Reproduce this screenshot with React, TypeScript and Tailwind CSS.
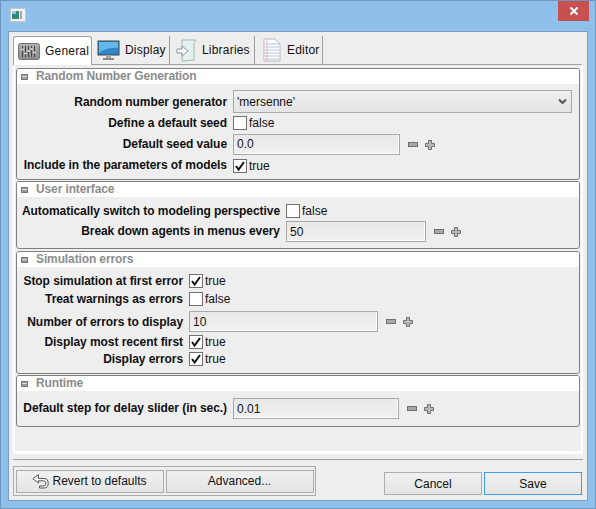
import { ReactNode } from "react";

const Check = ({ on }: { on: boolean }) => (
  <span className="w-[14px] h-[14px] border border-[#707070] bg-white flex items-center justify-center shrink-0">
    {on && (
      <svg width="12" height="12" viewBox="0 0 12 12">
        <path d="M2 6 L4.6 9.5 L10 2" fill="none" stroke="#111" strokeWidth="2" />
      </svg>
    )}
  </span>
);

const MinusPlus = () => (
  <div className="flex items-center gap-[7px] ml-[8px]">
    <svg width="10" height="5" viewBox="0 0 10 5">
      <rect x="0.5" y="0.5" width="9" height="4" fill="#a8a8a8" stroke="#707070" />
    </svg>
    <svg width="10" height="10" viewBox="0 0 10 10">
      <path d="M3.5 .5h3v3h3v3h-3v3h-3v-3h-3v-3h3z" fill="#b8b8b8" stroke="#707070" />
    </svg>
  </div>
);

const Section = ({ title, children, className }: { title: string; children: ReactNode; className: string }) => (
  <div className={`border border-[#808080] rounded-[3px] overflow-hidden shrink-0 ${className}`}>
    <div className="h-[15px] bg-white flex items-center pl-[4px]">
      <span className="w-[7px] h-[6px] bg-[#9a9a9a] border border-[#777] mr-[8px] flex items-center">
        <span className="block w-full h-px bg-[#ddd]" />
      </span>
      <span className="font-bold text-[12px] text-[#8c8c8c] tracking-[-0.12px] -translate-y-px">{title}</span>
    </div>
    {children}
  </div>
);

const Row = ({ label, w, h, up, children }: { label: string; w: string; h: string; up?: boolean; children: ReactNode }) => (
  <div className={`flex items-center ${h}`}>
    <div className={`text-right font-bold text-[12px] text-[#111] whitespace-nowrap shrink-0 tracking-[-0.06px] ${w} ${up ? "-translate-y-px" : ""}`}>{label}</div>
    <div className="flex items-center ml-[6px]">{children}</div>
  </div>
);

const Bool = ({ on }: { on: boolean }) => (
  <div className="flex items-center gap-[2px] text-[12px] text-[#111]">
    <Check on={on} />
    <span>{on ? "true" : "false"}</span>
  </div>
);

const Field = ({ value, w, h, up }: { value: string; w: string; h: string; up?: boolean }) => (
  <div className={`border border-[#a8a8a8] bg-gradient-to-b from-[#e8e8e8] to-[#f0f0f0] shadow-[inset_0_-1px_0_#fff,inset_-1px_0_0_#fff] flex items-center pl-[3px] text-[12px] text-[#111] ${up ? "pb-[2px]" : ""} ${w} ${h}`}>
    {value}
  </div>
);

const Tab = ({ icon, label, w, active }: { icon: ReactNode; label: string; w: string; active?: boolean }) => (
  <div
    className={`flex items-center ${w} ${
      active
        ? "h-[29px] bg-white border border-b-0 border-[#a0a0a0] rounded-t-[3px] -mb-px z-10"
        : "h-[28px] border-r border-[#a0a0a0]"
    }`}
  >
    {icon}
    <span className="text-[12px] text-[#111] tracking-[0.2px]">{label}</span>
  </div>
);

const BarButton = ({ children, w, blue }: { children: ReactNode; w: string; blue?: boolean }) => (
  <div
    className={`h-[23px] ${w} border ${blue ? "border-[#3c9cf0]" : "border-[#acacac]"} bg-gradient-to-b from-[#f0f0f0] to-[#e5e5e5] flex items-center justify-center gap-[3px] text-[12px] text-[#111]`}
  >
    {children}
  </div>
);

export default function App() {
  return (
    <div
      className="w-[596px] h-[509px] bg-[#8fc0ec] border border-[#6f97c0] flex flex-col overflow-hidden"
      style={{ fontFamily: '"Liberation Sans", Arial, sans-serif' }}
    >
      {/* title bar */}
      <div className="h-[30px] flex justify-between items-start shrink-0">
        <svg width="16" height="14" viewBox="0 0 16 14" className="ml-[9px] mt-[7px]">
          <rect x="0.5" y="0.5" width="15" height="13" fill="#f2f2f2" stroke="#c8c8c8" />
          <rect x="2" y="3" width="7" height="8" fill="#2f8a78" />
          <rect x="2" y="3" width="4" height="3" fill="#8fc5e8" />
          <rect x="10" y="3" width="2" height="8" fill="#a8a8a8" />
        </svg>
        <div className="w-[31px] h-[20px] bg-[#c75050] mr-[6px] flex items-center justify-center">
          <svg width="10" height="10" viewBox="0 0 10 10">
            <path d="M1.5 1.5 L8.5 8.5 M8.5 1.5 L1.5 8.5" stroke="#fff" strokeWidth="2" />
          </svg>
        </div>
      </div>

      {/* client area */}
      <div className="mx-[7px] h-[470px] bg-[#eeeeee] border border-[#7a9cc0] flex flex-col px-[4px] pt-[4px]">
        {/* tabs */}
        <div className="flex items-end h-[28px] shrink-0">
          <Tab
            active
            w="w-[79px]"
            label="General"
            icon={
              <svg width="22" height="17" viewBox="0 0 22 17" className="ml-[4px] mr-[5px] shrink-0">
                <defs>
                  <linearGradient id="fader" x1="0" y1="0" x2="0" y2="1">
                    <stop offset="0" stopColor="#b0b0b0" />
                    <stop offset="1" stopColor="#8a8a8a" />
                  </linearGradient>
                </defs>
                <rect x="0.5" y="0.5" width="21" height="16" rx="2" fill="url(#fader)" stroke="#757575" />
                <path d="M4.5 3v11M7.5 3v11M10.5 3v11M13.5 3v11M16.5 3v11" stroke="#444" />
                <path d="M3.5 6.5h2M6.5 10.5h2M9.5 8h2M12.5 6h2M15.5 9.5h2" stroke="#f2f2f2" strokeWidth="1.4" />
              </svg>
            }
          />
          <Tab
            w="w-[78px]"
            label="Display"
            icon={
              <svg width="23" height="21" viewBox="0 0 23 21" className="ml-[5px] mr-[5px] shrink-0">
                <rect x="1" y="1" width="21" height="14" fill="#2f86c8" stroke="#444" />
                <path d="M2 2h19v6Q10 7 2 13z" fill="#63b8ea" />
                <rect x="9" y="15" width="5" height="3" fill="#aaa" />
                <rect x="6" y="18" width="11" height="2" fill="#888" />
              </svg>
            }
          />
          <Tab
            w="w-[85px]"
            label="Libraries"
            icon={
              <svg width="21" height="25" viewBox="0 0 21 25" className="ml-[6px] mr-[5px] shrink-0">
                <path d="M6 2h14l-2 3v17l-12 1z" fill="#e2f0ee" stroke="#a8b8b4" />
                <path d="M1 11h5V8l6 5-6 5v-3H1z" fill="#fafafa" stroke="#8a9a96" />
              </svg>
            }
          />
          <Tab
            w="w-[68px]"
            label="Editor"
            icon={
              <svg width="18" height="24" viewBox="0 0 18 24" className="ml-[8px] mr-[6px] shrink-0">
                <path d="M1 1h11l5 5v17H1z" fill="#fff" stroke="#b8b8b8" />
                <path d="M2 6h14M2 9h14M2 12h14M2 15h14M2 18h14M2 21h14" stroke="#b8c4ec" />
                <path d="M4 2v20" stroke="#eeb0b0" />
              </svg>
            }
          />
        </div>

        {/* tab pane */}
        <div className="h-[390px] shrink-0 border-t border-[#a0a0a0] border-b-[3px] border-b-white border-x-[2px] border-x-white px-[1px] pt-[3px] flex flex-col">
          <Section title="Random Number Generation" className="h-[112px]">
            <div className="pt-[6px]">
              <Row label="Random number generator" w="w-[210px]" h="h-[23px]">
                <div className="w-[339px] h-[23px] border border-[#a8a8a8] bg-gradient-to-b from-[#f0f0f0] to-[#e4e4e4] flex items-center justify-between pl-[3px] pr-[4px] text-[12px] text-[#111]">
                  'mersenne'
                  <svg width="9" height="7" viewBox="0 0 9 7">
                    <path d="M1 1.5 L4.5 5 L8 1.5" fill="none" stroke="#555" strokeWidth="2" />
                  </svg>
                </div>
              </Row>
              <Row label="Define a default seed" w="w-[210px]" h="h-[21px] pb-[2px]"><Bool on={false} /></Row>
              <Row label="Default seed value" w="w-[210px]" h="h-[21px]" up>
                <Field value="0.0" w="w-[167px]" h="h-[21px]" up />
                <MinusPlus />
              </Row>
              <Row label="Include in the parameters of models" w="w-[210px]" h="h-[21px]" up><Bool on /></Row>
            </div>
          </Section>

          <Section title="User interface" className="h-[68px] mt-px">
            <div className="pt-[3px]">
              <Row label="Automatically switch to modeling perspective" w="w-[263px]" h="h-[21px]"><Bool on={false} /></Row>
              <Row label="Break down agents in menus every" w="w-[263px]" h="h-[21px]" up>
                <Field value="50" w="w-[140px]" h="h-[21px]" />
                <MinusPlus />
              </Row>
            </div>
          </Section>

          <Section title="Simulation errors" className="h-[123px] mt-[2px]">
            <div className="pt-[5px]">
              <Row label="Stop simulation at first error" w="w-[166px]" h="h-[18px]"><Bool on /></Row>
              <Row label="Treat warnings as errors" w="w-[166px]" h="h-[18px]"><Bool on={false} /></Row>
              <div className="pt-[3px]">
                <Row label="Number of errors to display" w="w-[166px]" h="h-[21px]">
                  <Field value="10" w="w-[189px]" h="h-[21px]" />
                  <MinusPlus />
                </Row>
              </div>
              <div className="pt-px">
                <Row label="Display most recent first" w="w-[166px]" h="h-[18px]"><Bool on /></Row>
              </div>
              <Row label="Display errors" w="w-[166px]" h="h-[15px]"><Bool on /></Row>
            </div>
          </Section>

          <Section title="Runtime" className="h-[52px] mt-px">
            <div className="pt-[7px]">
              <Row label="Default step for delay slider (in sec.)" w="w-[210px]" h="h-[21px]" up>
                <Field value="0.01" w="w-[166px]" h="h-[21px]" />
                <MinusPlus />
              </Row>
            </div>
          </Section>
        </div>

        {/* bottom bar */}
        <div className="mt-[5px] border-t border-[#a0a0a0] flex justify-between items-start">
          <div className="mt-[6px] border border-[#acacac] h-[30px] w-[303px] flex items-center justify-center gap-[2px]">
            <BarButton w="w-[148px]">
              <svg width="17" height="15" viewBox="0 0 17 15" fill="none" stroke="#5a5a5a">
                <path d="M6.5 0.5 L0.8 4.8 L6.5 9 V6.8 H11.5 Q14 6.8 14 9.5 Q14 12 11.5 12 H7.5 V14 H12 Q16.2 14 16.2 9.5 Q16.2 4.5 12 4.5 H6.5 Z" fill="#f8f8f8" />
              </svg>
              Revert to defaults
            </BarButton>
            <BarButton w="w-[148px]">Advanced...</BarButton>
          </div>
          <div className="mt-[12px] flex gap-[2px] mr-px">
            <BarButton w="w-[98px]">Cancel</BarButton>
            <BarButton w="w-[98px]" blue>Save</BarButton>
          </div>
        </div>
      </div>
    </div>
  );
}
